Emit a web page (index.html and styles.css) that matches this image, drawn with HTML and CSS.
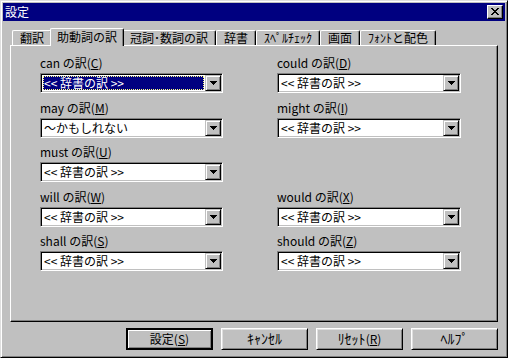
FILE: index.html
```html
<!DOCTYPE html>
<html lang="ja">
<head>
<meta charset="UTF-8">
<title>設定</title>
<link rel="stylesheet" href="styles.css">
</head>
<body>
<div class="window">
    <div class="titlebar">
        <span class="title">設定</span>
        <span class="close-btn">
            <svg width="8" height="7" viewBox="0 0 8 7" shape-rendering="crispEdges">
                <path d="M0 0h2v1h-2zM6 0h2v1h-2zM1 1h2v1h-2zM5 1h2v1h-2zM2 2h4v1h-4zM3 3h2v1h-2zM2 4h4v1h-4zM1 5h2v1h-2zM5 5h2v1h-2zM0 6h2v1h-2zM6 6h2v1h-2z" fill="#000"/>
            </svg>
        </span>
    </div>
    <div class="content">
        <div class="tabs">
            <div class="tab">翻訳</div>
            <div class="tab active">助動詞の訳</div>
            <div class="tab">冠詞･数詞の訳</div>
            <div class="tab">辞書</div>
            <div class="tab">ｽﾍﾟﾙﾁｪｯｸ</div>
            <div class="tab">画面</div>
            <div class="tab">ﾌｫﾝﾄと配色</div>
        </div>
        <div class="panel">
            <div class="fields">
                <div class="field">
                    <div class="label">can の訳(<u>C</u>)</div>
                    <div class="combo">
                        <div class="combo-text"><span class="selected">&lt;&lt; 辞書の訳 &gt;&gt;</span></div>
                        <div class="combo-btn"><svg width="7" height="4" viewBox="0 0 7 4" shape-rendering="crispEdges"><path d="M0 0h7v1h-7zM1 1h5v1h-5zM2 2h3v1h-3zM3 3h1v1h-1z" fill="#000"/></svg></div>
                    </div>
                </div>
                <div class="field">
                    <div class="label">could の訳(<u>D</u>)</div>
                    <div class="combo">
                        <div class="combo-text">&lt;&lt; 辞書の訳 &gt;&gt;</div>
                        <div class="combo-btn"><svg width="7" height="4" viewBox="0 0 7 4" shape-rendering="crispEdges"><path d="M0 0h7v1h-7zM1 1h5v1h-5zM2 2h3v1h-3zM3 3h1v1h-1z" fill="#000"/></svg></div>
                    </div>
                </div>
                <div class="field">
                    <div class="label">may の訳(<u>M</u>)</div>
                    <div class="combo">
                        <div class="combo-text">〜かもしれない</div>
                        <div class="combo-btn"><svg width="7" height="4" viewBox="0 0 7 4" shape-rendering="crispEdges"><path d="M0 0h7v1h-7zM1 1h5v1h-5zM2 2h3v1h-3zM3 3h1v1h-1z" fill="#000"/></svg></div>
                    </div>
                </div>
                <div class="field">
                    <div class="label">might の訳(<u>I</u>)</div>
                    <div class="combo">
                        <div class="combo-text">&lt;&lt; 辞書の訳 &gt;&gt;</div>
                        <div class="combo-btn"><svg width="7" height="4" viewBox="0 0 7 4" shape-rendering="crispEdges"><path d="M0 0h7v1h-7zM1 1h5v1h-5zM2 2h3v1h-3zM3 3h1v1h-1z" fill="#000"/></svg></div>
                    </div>
                </div>
                <div class="field">
                    <div class="label">must の訳(<u>U</u>)</div>
                    <div class="combo">
                        <div class="combo-text">&lt;&lt; 辞書の訳 &gt;&gt;</div>
                        <div class="combo-btn"><svg width="7" height="4" viewBox="0 0 7 4" shape-rendering="crispEdges"><path d="M0 0h7v1h-7zM1 1h5v1h-5zM2 2h3v1h-3zM3 3h1v1h-1z" fill="#000"/></svg></div>
                    </div>
                </div>
                <div class="field"></div>
                <div class="field">
                    <div class="label">will の訳(<u>W</u>)</div>
                    <div class="combo">
                        <div class="combo-text">&lt;&lt; 辞書の訳 &gt;&gt;</div>
                        <div class="combo-btn"><svg width="7" height="4" viewBox="0 0 7 4" shape-rendering="crispEdges"><path d="M0 0h7v1h-7zM1 1h5v1h-5zM2 2h3v1h-3zM3 3h1v1h-1z" fill="#000"/></svg></div>
                    </div>
                </div>
                <div class="field">
                    <div class="label">would の訳(<u>X</u>)</div>
                    <div class="combo">
                        <div class="combo-text">&lt;&lt; 辞書の訳 &gt;&gt;</div>
                        <div class="combo-btn"><svg width="7" height="4" viewBox="0 0 7 4" shape-rendering="crispEdges"><path d="M0 0h7v1h-7zM1 1h5v1h-5zM2 2h3v1h-3zM3 3h1v1h-1z" fill="#000"/></svg></div>
                    </div>
                </div>
                <div class="field">
                    <div class="label">shall の訳(<u>S</u>)</div>
                    <div class="combo">
                        <div class="combo-text">&lt;&lt; 辞書の訳 &gt;&gt;</div>
                        <div class="combo-btn"><svg width="7" height="4" viewBox="0 0 7 4" shape-rendering="crispEdges"><path d="M0 0h7v1h-7zM1 1h5v1h-5zM2 2h3v1h-3zM3 3h1v1h-1z" fill="#000"/></svg></div>
                    </div>
                </div>
                <div class="field">
                    <div class="label">should の訳(<u>Z</u>)</div>
                    <div class="combo">
                        <div class="combo-text">&lt;&lt; 辞書の訳 &gt;&gt;</div>
                        <div class="combo-btn"><svg width="7" height="4" viewBox="0 0 7 4" shape-rendering="crispEdges"><path d="M0 0h7v1h-7zM1 1h5v1h-5zM2 2h3v1h-3zM3 3h1v1h-1z" fill="#000"/></svg></div>
                    </div>
                </div>
            </div>
        </div>
        <div class="buttons">
            <div class="btn default">設定(<u>S</u>)</div>
            <div class="btn"><span class="hw">ｷｬﾝｾﾙ</span></div>
            <div class="btn"><span class="hw">ﾘｾｯﾄ</span>(<u>R</u>)</div>
            <div class="btn"><span class="hw">ﾍﾙﾌﾟ</span></div>
        </div>
    </div>
</div>
</body>
</html>
```

FILE: styles.css
```css
body {
    margin: 0;
    font-family: "Noto Sans CJK JP", "Liberation Sans", sans-serif;
    font-size: 12px;
    color: #000;
}
u {
    text-decoration: underline;
    text-underline-offset: 1px;
}
.hw {
    font-size: 14px;
}
.window {
    width: 508px;
    height: 358px;
    box-sizing: border-box;
    background-color: #c0c0c0;
    border: 1px solid;
    border-color: #dfdfdf #000 #000 #dfdfdf;
    box-shadow: inset 1px 1px #fff, inset -1px -1px #808080;
    padding: 2px;
    display: flex;
    flex-direction: column;
}
.titlebar {
    height: 18px;
    background-color: #000080;
    color: #fff;
    display: flex;
    align-items: center;
    justify-content: space-between;
    padding: 0 2px 0 2px;
}
.title {
    line-height: 18px;
}
.close-btn {
    width: 16px;
    height: 14px;
    box-sizing: border-box;
    background-color: #c0c0c0;
    border: 1px solid;
    border-color: #fff #000 #000 #fff;
    box-shadow: inset -1px -1px #808080;
    display: flex;
    align-items: center;
    justify-content: center;
    padding: 0 1px 1px 0;
}
.content {
    padding: 0 7px;
}
.tabs {
    display: flex;
    align-items: flex-end;
    height: 17px;
    margin-top: 7px;
    padding-left: 2px;
}
.tab {
    height: 15px;
    box-sizing: border-box;
    padding: 0 7px;
    line-height: 14px;
    border-top: 1px solid #fff;
    border-left: 1px solid #fff;
    border-right: 1px solid #000;
    box-shadow: inset -1px 0 #808080;
    border-radius: 2px 2px 0 0;
    white-space: nowrap;
}
.tab.active {
    height: 18px;
    margin: 0 -2px -1px -2px;
    padding: 0 6px;
    line-height: 15px;
    background-color: #c0c0c0;
    position: relative;
    z-index: 1;
}
.panel {
    height: 277px;
    box-sizing: border-box;
    border: 1px solid;
    border-color: #fff #000 #000 #fff;
    box-shadow: inset -1px -1px #808080;
    padding: 10px 0 0 29px;
}
.fields {
    display: grid;
    grid-template-columns: 183px 184px;
    grid-auto-rows: 37px;
    column-gap: 54px;
    row-gap: 7.5px;
}
.label {
    height: 14px;
    line-height: 14px;
    margin-bottom: 3px;
    white-space: nowrap;
}
.combo {
    height: 20px;
    box-sizing: border-box;
    background-color: #fff;
    border: 1px solid;
    border-color: #808080 #fff #fff #808080;
    box-shadow: inset 1px 1px #000, inset -1px -1px #c0c0c0;
    padding: 1px;
    display: flex;
}
.combo-text {
    flex: 1;
    height: 16px;
    line-height: 16px;
    padding-left: 2px;
    display: flex;
    white-space: nowrap;
}
.selected {
    flex: 1;
    height: 14px;
    line-height: 14px;
    margin: 1px 1px 0 -1px;
    padding-left: 1px;
    background-color: #000080;
    color: #fff;
    outline: 1px dotted #ffff80;
    outline-offset: -1px;
}
.combo-btn {
    width: 16px;
    height: 16px;
    box-sizing: border-box;
    background-color: #c0c0c0;
    border: 1px solid;
    border-color: #c0c0c0 #000 #000 #c0c0c0;
    box-shadow: inset 1px 1px #fff, inset -1px -1px #808080;
    display: flex;
    align-items: center;
    justify-content: center;
}
.buttons {
    display: flex;
    justify-content: flex-end;
    gap: 8px;
    margin-top: 6px;
}
.btn {
    width: 87px;
    height: 22px;
    box-sizing: border-box;
    border: 1px solid;
    border-color: #fff #000 #000 #fff;
    box-shadow: inset 1px 1px #dfdfdf, inset -1px -1px #808080;
    text-align: center;
    line-height: 19px;
    white-space: nowrap;
}
.btn.default {
    border: 2px solid;
    border-color: #000;
    box-shadow: inset 1px 1px #fff, inset -1px -1px #808080;
    line-height: 17px;
}
```
